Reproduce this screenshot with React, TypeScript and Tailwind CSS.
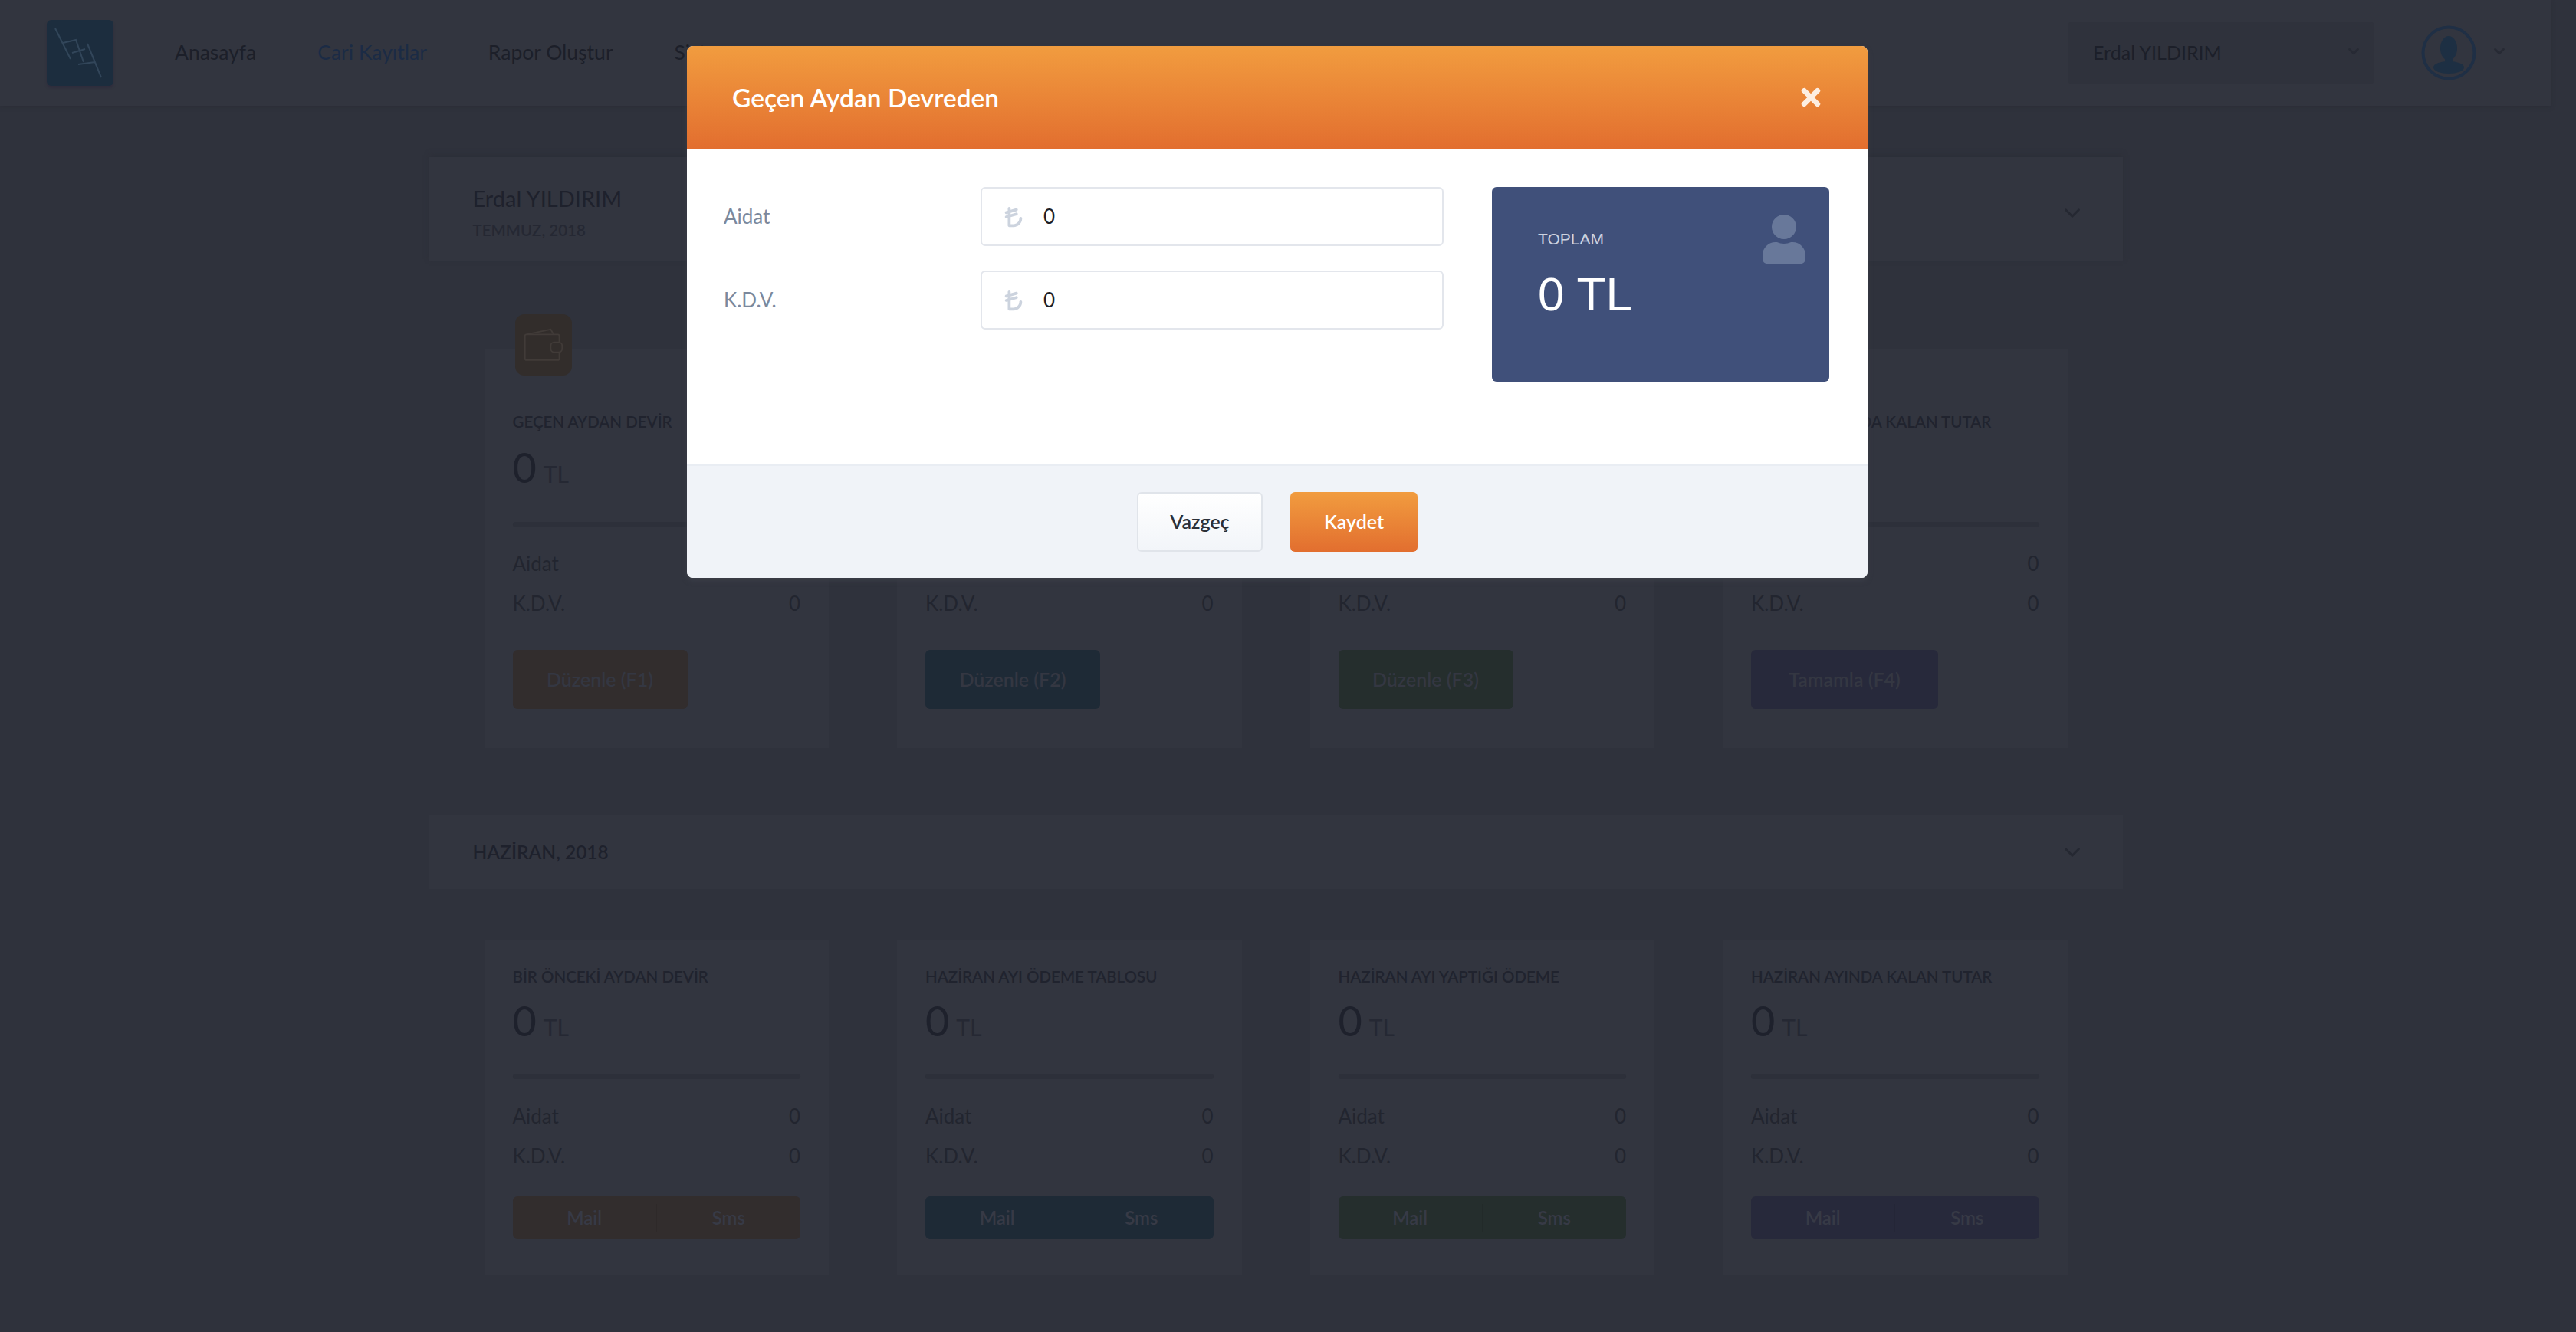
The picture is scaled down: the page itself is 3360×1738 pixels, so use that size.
import { FaTimes, FaUser } from 'react-icons/fa'
import { FaTurkishLiraSign } from 'react-icons/fa6'
import { ChevronDown } from 'lucide-react'

const sans = 'font-["Lato","Noto_Sans",sans-serif]'

type Tone = { wrap: string; splitLine: string }

const tones: Tone[] = [
  { wrap: 'bg-[#322d2d]', splitLine: 'border-[#2e2929]' },
  { wrap: 'bg-[#1e2a36]', splitLine: 'border-[#1b2733]' },
  { wrap: 'bg-[#252e2d]', splitLine: 'border-[#222a29]' },
  { wrap: 'bg-[#27293b]', splitLine: 'border-[#242637]' },
]

const current = [
  { title: 'GEÇEN AYDAN DEVİR', action: 'Düzenle (F1)', width: 'w-[228px]' },
  { title: 'TEMMUZ AYI ÖDEME TABLOSU', action: 'Düzenle (F2)', width: 'w-[228px]' },
  { title: 'TEMMUZ AYI YAPTIĞI ÖDEME', action: 'Düzenle (F3)', width: 'w-[228px]' },
  { title: 'TEMMUZ AYINDA KALAN TUTAR', action: 'Tamamla (F4)', width: 'w-[244px]' },
]

const previous = [
  'BİR ÖNCEKİ AYDAN DEVİR',
  'HAZİRAN AYI ÖDEME TABLOSU',
  'HAZİRAN AYI YAPTIĞI ÖDEME',
  'HAZİRAN AYINDA KALAN TUTAR',
]

function Logo() {
  return (
    <div className="h-[86px] w-[87px] rounded-md bg-[#1c2d3e] shadow-[0_3px_3px_#2f2d3d]">
      <svg viewBox="0 0 87 86" className="h-full w-full" fill="none" stroke="#32465a" strokeWidth="2">
        <path d="M11 11 L31 51" />
        <path d="M21 30 L38 26 L48 55" />
        <path d="M33 43 L50 38" />
        <path d="M53 31 L71 75" />
        <path d="M41 58 L63 55" />
      </svg>
    </div>
  )
}

function Wallet() {
  return (
    <div className="absolute left-[40px] top-[-45px] flex h-[80px] w-[74px] items-center justify-center rounded-xl bg-[#322d2b]">
      <svg viewBox="0 0 60 50" className="w-[56px]" fill="none" stroke="#413b38" strokeWidth="2">
        <path d="M6 10 L40 3 L44 10" />
        <rect x="4" y="10" width="48" height="36" rx="2" />
        <rect x="40" y="21" width="16" height="14" rx="5" fill="#322d2b" />
      </svg>
    </div>
  )
}

function Rows() {
  return (
    <div className="flex flex-col gap-[26px] text-[26px] leading-[26px] text-[#22252f]">
      <div className="flex justify-between">
        <span>Aidat</span>
        <span>0</span>
      </div>
      <div className="flex justify-between">
        <span>K.D.V.</span>
        <span>0</span>
      </div>
    </div>
  )
}

function Amount() {
  return (
    <div className="flex items-baseline gap-[9px] text-[#1e212c]">
      <span className="text-[54px] leading-[54px]">0</span>
      <span className="text-[30px] leading-[30px] text-[#252833]">TL</span>
    </div>
  )
}

function App() {
  return (
    <div className={`relative h-[1738px] w-full overflow-hidden bg-[#2f323c] ${sans}`}>
      <div className="w-[3328px]">
        <header className="flex h-[138px] items-center bg-[#32353f] pl-[61px] pr-[57px] shadow-[0_2px_4px_#2c2f38]">
          <Logo />
          <nav className="ml-[80px] flex gap-[80px] text-[26.5px] text-[#1c1f29]">
            <span>Anasayfa</span>
            <span className="text-[#1b2b45]">Cari Kayıtlar</span>
            <span>Rapor Oluştur</span>
            <span>Sistem</span>
          </nav>
          <div className="ml-auto flex h-[80px] w-[400px] items-center justify-between rounded bg-[#2f323c] pl-[33px] pr-[16px] text-[25px] text-[#1c1f29]">
            <span>Erdal YILDIRIM</span>
            <ChevronDown className="mb-[4px]" size={22} strokeWidth={3} color="#272a34" />
          </div>
          <svg viewBox="0 0 72 72" className="ml-[61px] h-[72px] w-[72px]">
            <circle cx="36" cy="36" r="33.5" fill="none" stroke="#1f2f45" strokeWidth="4" />
            <ellipse cx="36" cy="30" rx="11" ry="16" fill="#1d2f43" />
            <ellipse cx="36" cy="55" rx="20" ry="8" fill="#1d2f43" />
            <rect x="31" y="40" width="10" height="12" fill="#1d2f43" />
          </svg>
          <ChevronDown className="mb-[4px] ml-[19px]" size={22} strokeWidth={3} color="#272a34" />
        </header>

        <main className="mx-auto flex w-[2209px] flex-col pt-[67px]">
          <section className="flex h-[136px] items-center justify-between bg-[#32353f] pl-[57px] pr-[49px] shadow-[0_-3px_6px_#2c2f38]">
            <div className="flex flex-col pt-[12px]">
              <span className="text-[29px] leading-[42px] text-[#1e212c]">Erdal YILDIRIM</span>
              <span className="text-[20.5px] font-semibold leading-[40px] text-[#252833]">TEMMUZ, 2018</span>
            </div>
            <ChevronDown className="mt-[10px]" size={34} strokeWidth={2} color="#252832" />
          </section>

          <div className="mt-[114px] grid grid-cols-4 gap-[89px] px-[72px]">
            {current.map((c, i) => (
              <article key={c.title} className="relative flex h-[521px] flex-col bg-[#32353f] px-[37px] pt-[82px]">
                {i === 0 ? <Wallet /> : null}
                <h3 className="text-[20.5px] font-semibold leading-[26px] text-[#20232e]">{c.title}</h3>
                <div className="mt-[20px]">
                  <Amount />
                </div>
                <div className="mt-[44px] h-[7px] rounded bg-[#2d303a]" />
                <div className="mt-[34px]">
                  <Rows />
                </div>
                <div
                  className={`mt-[48px] flex h-[77px] items-center justify-center rounded-md text-[25px] font-semibold text-[#343742] ${c.width} ${tones[i].wrap}`}
                >
                  {c.action}
                </div>
              </article>
            ))}
          </div>

          <section className="mt-[88px] flex h-[96px] items-center justify-between bg-[#32353f] pl-[57px] pr-[49px]">
            <span className="text-[24.5px] font-semibold text-[#1e212c]">HAZİRAN, 2018</span>
            <ChevronDown size={34} strokeWidth={2} color="#252832" />
          </section>

          <div className="mt-[67px] grid grid-cols-4 gap-[89px] px-[72px]">
            {previous.map((title, i) => (
              <article key={title} className="flex h-[436px] flex-col bg-[#32353f] px-[37px] pt-[34px]">
                <h3 className="text-[20.5px] font-semibold leading-[26px] text-[#20232e]">{title}</h3>
                <div className="mt-[18px]">
                  <Amount />
                </div>
                <div className="mt-[42px] h-[7px] rounded bg-[#2d303a]" />
                <div className="mt-[35px]">
                  <Rows />
                </div>
                <div className={`mt-[40px] flex h-[56px] items-center rounded-md text-[24px] font-semibold text-[#373a46] ${tones[i].wrap}`}>
                  <span className={`flex-1 border-r text-center ${tones[i].splitLine}`}>Mail</span>
                  <span className="flex-1 text-center">Sms</span>
                </div>
              </article>
            ))}
          </div>
        </main>
      </div>

      <div className="absolute left-[896px] top-[60px] flex h-[694px] w-[1540px] flex-col overflow-hidden rounded-lg bg-white shadow-[0_4px_6px_#3a3d47]">
        <div className="flex h-[134px] items-center justify-between bg-gradient-to-b from-[#f19c3f] to-[#e26e2f] pl-[59px] pr-[56px] text-white">
          <span className="text-[33.5px] font-semibold">Geçen Aydan Devreden</span>
          <FaTimes size={36} color="#fdeee0" />
        </div>

        <div className="flex flex-1 justify-between pl-[48px] pr-[50px] pt-[50px]">
          <div className="flex w-[939px] flex-col gap-[32px]">
            {['Aidat', 'K.D.V.'].map((label) => (
              <div key={label} className="flex items-center justify-between">
                <label className="text-[26px] text-[#7b889c]">{label}</label>
                <div className="flex h-[77px] w-[604px] items-center rounded-md border-2 border-[#e3e6ec] pl-[26px] text-[26px] text-[#1d2026]">
                  <span className="w-[54px]">
                    <FaTurkishLiraSign size={30} color="#ccd3de" />
                  </span>
                  <span>0</span>
                </div>
              </div>
            ))}
          </div>
          <div className="relative h-[254px] w-[440px] rounded-md bg-[#40507a] pl-[60px] pt-[54px] font-['Liberation_Sans',sans-serif]">
            <div className="text-[21px] leading-[28px] text-[#cdd3e0]">TOPLAM</div>
            <div className="mt-[27px] text-[62px] leading-[62px] text-white">0 TL</div>
            <FaUser size={64} color="#68789a" className="absolute right-[27px] top-[36px]" />
          </div>
        </div>

        <div className="flex h-[148px] items-center justify-center gap-[36px] border-t-2 border-[#e9edf3] bg-[#f0f3f8]">
          <button className="h-[78px] w-[164px] rounded-md border-2 border-[#e0e4ea] bg-gradient-to-b from-white to-[#f2f5f9] text-[25px] font-semibold text-[#2b3038]">
            Vazgeç
          </button>
          <button className="h-[78px] w-[166px] rounded-md bg-gradient-to-b from-[#f19c3f] to-[#e26e2f] text-[25px] font-semibold text-white">
            Kaydet
          </button>
        </div>
      </div>
    </div>
  )
}

export default App
